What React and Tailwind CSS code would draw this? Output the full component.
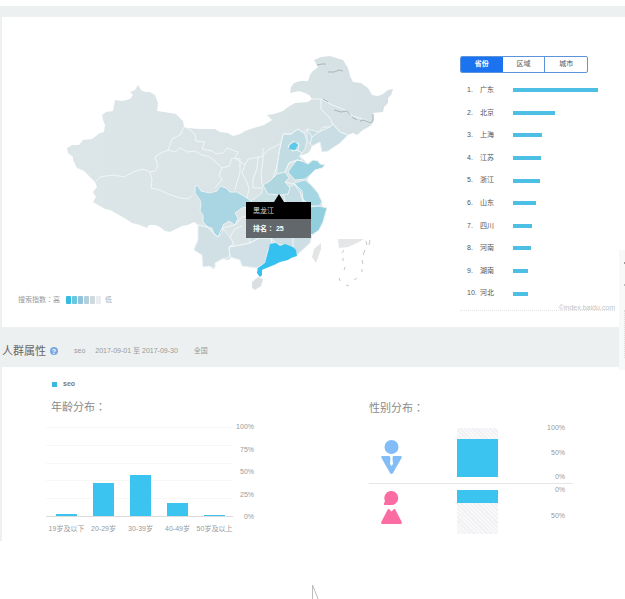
import React from "react";

const PROVINCES = [
  ["广东", 85],
  ["北京", 42],
  ["上海", 29],
  ["江苏", 28],
  ["浙江", 27],
  ["山东", 23],
  ["四川", 19],
  ["河南", 18],
  ["湖南", 15],
  ["河北", 15],
];

const AGES = [
  ["19岁及以下", 2],
  ["20-29岁", 33],
  ["30-39岁", 41],
  ["40-49岁", 13],
  ["50岁及以上", 1],
];

const SCALE = ["bg-[#35bce3]", "bg-[#66c8e2]", "bg-[#8fc4dc]", "bg-[#b3cfdc]", "bg-[#cfd9de]", "bg-[#e9edef]"];

const LAND =
  "M138 85L141 90 145 92 150 92 155 95 158 103 157 111 164 112 170 113 176 114 180 118 183 121 184 127 187 128 200 129 215 129 220 132 228 133 233 136 240 134 245 131 257 127 264 125 272 120 267 115 274 114 283 111 288 107 295 103 308 102 312 99 309 95 305 93 299 91 290 93 291 87 294 83 300 81 308 81 310 75 312 72 318 67 314 60 321 57 330 56 336 58 343 60 348 68 350 76 353 82 361 83 368 88 372 95 378 96 383 94 388 90 393 89 391 95 388 98 388 103 384 107 383 112 373 113 374 119 372 125 363 130 357 135 353 133 348 135 340 143 335 146 328 151 322 152 323 145 320 142 316 143 312 146 310 151 308 153 300 156 304 160 308 164 313 160 318 161 320 164 325 165 322 168 315 170 310 175 307 180 311 185 315 189 318 193 319 198 322 202 322 206 327 208 325 215 323 222 319 230 312 235 310 243 303 249 297 255 291 258 280 261 274 263 264 267 262 270 262 275 260 277 257 273 257 268 250 267 242 266 240 260 233 257 228 260 222 259 215 263 215 268 213 269 209 266 203 267 202 261 202 255 194 250 195 246 198 240 198 225 194 222 188 225 182 226 176 229 170 232 165 231 160 227 155 225 149 225 147 228 140 225 132 223 126 219 119 215 110 210 105 209 98 205 93 202 96 197 93 192 97 187 95 182 90 177 84 171 77 168 73 160 73 157 68 153 67 148 72 145 79 145 83 140 92 139 100 133 104 132 105 125 103 120 102 115 106 112 113 111 114 105 115 100 122 101 130 99 133 95 130 92 135 90Z";

const BORDERS = [
  "M184 127L180 135 172 139 168 150 161 153 155 157 158 166 155 171 150 172 143 169 133 172 124 177 114 175 106 176 100 177 96 181",
  "M150 172L152 180 151 188 160 190 168 194 180 198 188 199 193 195",
  "M168 150L175 152 180 148 188 152 195 151 202 155 210 157 218 164 222 168 219 175 222 180 218 184 215 188",
  "M187 128L195 134 196 141 205 142 202 149 212 151 216 154 223 153 227 148 238 152 235 158 245 165",
  "M222 168L229 166 232 158 240 159 240 173 237 182 235 190",
  "M245 165L248 159 254 158 263 156 268 150 276 146 281 143",
  "M245 165L242 173 247 182 249 189 247 198",
  "M258 157L257 169 253 179 253 188 262 188",
  "M281 143L279 153 277 166 273 178",
  "M263 148L263 160 261 174 262 185",
  "M281 143L283 134 291 134 298 129 304 133 307 129 312 137 310 144",
  "M288 146L293 141 299 144 298 150 292 151Z",
  "M297 150L302 153 299 157M285 172L289 163 297 160 302 161",
  "M312 137L319 132 323 127 330 127 333 124 329 117 321 109 321 99",
  "M333 124L340 132 348 135",
  "M312 99L321 99 332 105 343 109 353 116 366 120 372 125",
  "M198 225L207 227 218 237 222 228 235 225 242 217 247 216",
  "M230 257L229 247 234 244 230 237 235 229 242 226",
  "M229 247L241 245 250 243 259 238 271 238 272 243",
  "M271 238L276 223 273 208 261 205 247 205",
  "M285 182L294 184 300 192 303 201 297 207 286 206 280 195",
  "M297 207L300 214 294 224 293 239 293 247",
  "M310 207L303 216 302 228 306 231 312 235",
];

function ChinaMap() {
  return (
    <svg className="block w-full" viewBox="60 50 340 243" role="img" aria-label="中国">
      <defs>
        <linearGradient id="land" x1="0" x2="1" y1="0" y2="0">
          <stop offset="0" stopColor="#dce6e9" />
          <stop offset="0.5" stopColor="#dae4e7" />
          <stop offset="1" stopColor="#d4e0e3" />
        </linearGradient>
      </defs>
      <path d={LAND} fill="url(#land)" />
      <g stroke="#eaf2f4" strokeWidth="1" strokeLinejoin="round">
        <path fill="#c2dce4" d="M281 143L283 134 291 134 298 129 304 133 307 140 305 149 300 156 302 161 297 160 289 163 285 172 277 174 277 166 279 153Z" />
        <path fill="#c8dde4" d="M307 129L319 132 330 127 333 124 340 132 348 135 340 143 328 151 322 152 320 142 312 146 307 140Z" />
        <path fill="#c8dfe4" d="M263 185L262 193 256 198 248 202 255 208 270 209 285 215 300 214 303 201 290 188Z" />
        <path fill="#c4dde4" d="M294 184L300 182 305 190 303 201 297 207 286 206 283 192Z" />
        <path fill="#cddfe5" d="M248 216L250 243 259 238 271 238 277 244 293 247 297 255 310 243 312 235 302 214Z" />
        <path fill="#d0e0e6" d="M229 247L241 245 250 243 259 238 271 238 272 243 268 250 265 263 257 268 242 266 240 260 230 257Z" />
        <path fill="#d1e0e4" d="M198 225L207 227 218 237 222 228 230 237 234 244 229 247 230 257 222 259 215 263 215 268 209 266 203 267 202 255 194 250 198 240Z" />
        <path fill="#a9d6e2" d="M195 186L198 186 201 191 210 193 217 191 220 186 226 188 230 192 237 192 247 198 252 202 248 207 242 208 235 213 238 218 235 225 229 221 223 225 222 233 218 237 214 234 212 228 208 227 203 222 203 215 200 211 201 204 200 200 195 193Z" />
        <path fill="#b0d7e0" d="M263 185L270 181 273 178 277 174 285 172 289 178 285 182 290 188 288 194 280 195 268 194Z" />
        <path fill="#99d3e1" d="M288 172L292 166 297 160 302 161 308 164 313 160 318 161 320 164 325 165 322 168 315 170 310 175 305 179 295 180Z" />
        <path fill="#a5d6e3" d="M294 183L305 180 311 185 318 193 322 202 319 206 310 206 303 199 302 191Z" />
        <path fill="#91cede" d="M310 207L319 206 327 208 325 215 323 222 319 230 312 235 303 226 303 216Z" />
        <path fill="#35c1ef" stroke="none" d="M270 244L276 243 280 246 285 244 293 247 296 250 297 256 291 258 288 260 280 262 274 265 264 269 262 270 262 275 260 277 257 273 258 268 265 263 268 252Z" />
      </g>
      <g fill="none" stroke="#f0f6f7" strokeWidth="1" strokeLinejoin="round">
        {BORDERS.map((d) => (
          <path key={d} d={d} />
        ))}
      </g>
      <path d="M290 145L295 142 298 145 295 150 289 149Z" fill="#5cc8ea" />
      <g fill="none" stroke="#aab5b9" strokeWidth="1">
        <path d="M317 65l5-1 4 0M328 72l6 0 5-2 4 1" />
        <path d="M323 99l5 3M334 110l7 2 6-1 3 4M352 117l5 3M360 121l4-1 6 3 3-2 0-7" />
      </g>
      <path d="M252 282L258 277 263 279 261 286 255 290 252 288Z" fill="#dcdfe1" />
      <path d="M321 243L321 249 316 263 312 257 314 249Z" fill="#e2e4e6" />
      <path d="M338 239L364 239 357 243 348 247 339 248Z" fill="#e4e6e8" />
      <g fill="none" stroke="#c3c8cb" strokeWidth="1">
        <path d="M366 241l1 4M370 240l-1 5M365 250l-2 5M362 260l1 4M362 269l0 3M357 278l-3 2M349 286l-3-1M340 281l-1-3M344 270l1-3M343 261l0-3M342 253l2-3" />
      </g>
    </svg>
  );
}

function Colon() {
  return <span className="font-['Noto_Sans_CJK_TC',sans-serif]">：</span>;
}

function MapCard() {
  return (
    <section className="flex bg-white pb-4">
      <div className="min-w-0 flex-1 pt-[33px]">
        <div className="relative ml-[58px] w-[340px]">
          <ChinaMap />
          <div role="tooltip" className="absolute left-[186px] top-[152px] w-[65px] text-white">
            <svg className="absolute -top-2 left-7 h-2 w-2.5" viewBox="0 0 10 8" aria-hidden="true">
              <path d="M5 0L10 8H0Z" fill="#000" />
            </svg>
            <div className="bg-black pl-[7px] text-[7px] leading-[17px] text-[#d8d8d8]">黑龙江</div>
            <div className="bg-[#62676b] pl-[7px] text-[7px] font-bold leading-[19px]">排名<Colon /> 25</div>
          </div>
        </div>
        <div className="flex items-center pl-4 text-[7px] leading-3 text-[#999]">
          <span>搜索指数<Colon />高</span>
          <span className="ml-1.5 flex gap-px">
            {SCALE.map((c) => (
              <i key={c} className={"h-2 w-[5px] rounded-[1px] " + c} />
            ))}
          </span>
          <span className="ml-1 text-[#aaa]">低</span>
        </div>
      </div>
      <div className="w-[165px] shrink-0 pt-[39px]">
        <div className="mb-1.5 flex h-[17px] w-32 overflow-hidden rounded-[2px] border border-[#5b94d8] text-[7px] text-[#555]">
          <button className="flex-1 bg-[#1c73f0] font-bold text-white">省份</button>
          <button className="flex-1 border-r border-[#5b94d8]">区域</button>
          <button className="flex-1">城市</button>
        </div>
        <ol className="grid h-[226px] grid-rows-10 text-[7px] text-[#555]">
          {PROVINCES.map(([name, w], i) => (
            <li key={name} className="flex items-center pl-[7px]">
              <span className="w-[13px]">{i + 1}.</span>
              <span className="w-[33px]">{name}</span>
              <i className="h-1 bg-[#4dbfe5]" style={{ width: w }} />
            </li>
          ))}
        </ol>
        <p className="mr-2.5 h-1.5 border-b border-dotted border-[#e2e2e2] text-right text-[7px] leading-[5px] text-[#c4c4c4]">©index.baidu.com</p>
      </div>
    </section>
  );
}

function AgeChart() {
  return (
    <div className="min-w-0 flex-1 pt-[11px]">
      <div className="flex items-center gap-1.5 pl-[50px] text-[7px] font-bold leading-3 text-[#777]">
        <i className="h-[5px] w-[5px] bg-[#3bb8e0]" />
        seo
      </div>
      <h3 className="mt-2 pl-[49px] text-[11px] leading-4 text-[#8a8a8a]">年龄分布<Colon /></h3>
      <div className="ml-11 mt-1.5 flex">
        <div className="w-[187px]">
          <div className="mt-1.5 grid h-[90px] grid-rows-5 border-b border-[#dcdcdc] *:col-start-1 *:border-t *:border-[#f7f7f7]">
            <i className="row-start-1" />
            <i className="row-start-2" />
            <i className="row-start-3" />
            <i className="row-start-4" />
            <i className="row-start-5" />
            <div className="row-span-full row-start-1 flex items-end border-none pl-0.5">
              {AGES.map(([label, h]) => (
                <span key={label} className="flex w-[37px] justify-center">
                  <i className="w-[21px] bg-[#3cc4f1]" style={{ height: h }} />
                </span>
              ))}
            </div>
          </div>
          <div className="mt-1.5 flex pl-0.5 text-[7px] leading-3 text-[#999]">
            {AGES.map(([label]) => (
              <span key={label} className="flex w-[37px] justify-center whitespace-nowrap">{label}</span>
            ))}
          </div>
        </div>
        <div className="flex h-[102px] w-[21px] flex-col justify-between text-right text-[7px] leading-3 text-[#999]">
          <span>100%</span>
          <span>75%</span>
          <span>50%</span>
          <span>25%</span>
          <span>0%</span>
        </div>
      </div>
    </div>
  );
}

function GenderChart() {
  const hatch = "bg-[repeating-linear-gradient(45deg,#f0f0f2_0px,#f0f0f2_1px,#f8f8fa_1px,#f8f8fa_3px)]";
  return (
    <div className="w-64 shrink-0 pt-8">
      <h3 className="text-[11px] leading-4 text-[#8a8a8a]">性别分布<Colon /></h3>
      <div className="mt-1.5 flex h-[62px] w-[204px] border-b border-[#e6e6e6]">
        <svg className="ml-3 mt-[18px] h-[35px] w-[21px]" viewBox="0 0 21 35" aria-label="男">
          <circle cx="10.5" cy="7" r="7" fill="#83bdf8" />
          <path d="M1.5 16H19.500Q21.500 16 20.500 18L12 33Q10.500 35 9 33L0.500 18Q-0.500 16 1.500 16Z" fill="#83bdf8" />
          <path d="M8.500 16H12L11.500 18 12 24 10.500 26 9 24 9.500 18Z" fill="#fff" />
        </svg>
        <div className={"ml-[55px] mt-1.5 flex h-[49px] w-[41px] items-end " + hatch}>
          <i className="h-[38px] w-full bg-[#3cc4f1]" />
        </div>
        <div className="flex flex-1 flex-col justify-between pr-2 text-right text-[7px] leading-3 text-[#999]">
          <span>100%</span>
          <span>50%</span>
          <span>0%</span>
        </div>
      </div>
      <div className="flex w-[204px]">
        <svg className="ml-3 mt-[7px] h-[33px] w-[21px]" viewBox="0 0 21 33" aria-label="女">
          <path d="M10.500 0A7 7 0 1 1 10 14H4Q2.500 14 3 12.500L4 10A7 7 0 0 1 10.500 0Z" fill="#fb6ca2" />
          <path d="M7 18H8L10.500 20.500 13 18H14L20.500 30.500Q21.500 33 19.500 33H1.500Q-0.500 33 0.500 30.500Z" fill="#fb6ca2" />
          <path d="M6.500 15.500L10.500 19 14.500 15.500" fill="none" stroke="#fff" />
        </svg>
        <div className={"ml-[55px] mt-1.5 h-11 w-[41px] " + hatch}>
          <i className="block h-[13px] w-full bg-[#3cc4f1]" />
        </div>
        <div className="flex h-[38px] flex-1 flex-col justify-between pr-2 text-right text-[7px] leading-3 text-[#999]">
          <span>0%</span>
          <span>50%</span>
        </div>
      </div>
    </div>
  );
}

export default function App() {
  return (
    <main className="bg-white pt-1.5 font-['Liberation_Sans','Noto_Sans_CJK_SC',sans-serif]">
      <div className="relative bg-[#edf0f0] pl-0.5 pt-[11px]">
        <MapCard />
        <header className="flex h-10 items-center pt-2 text-[7px] text-[#999]">
          <h2 className="text-[11px] text-[#666]">人群属性</h2>
          <button aria-label="帮助" className="ml-1 flex h-2 w-2 items-center justify-center rounded-full bg-[#79a8e2] text-[7px] font-bold leading-none text-white">?</button>
          <span className="ml-4">seo</span>
          <span className="ml-2.5">2017-09-01 至 2017-09-30</span>
          <span className="ml-4">全国</span>
        </header>
        <section className="flex bg-white pb-1.5">
          <AgeChart />
          <GenderChart />
        </section>
        <aside className="absolute right-0 top-[244px] flex h-[120px] w-1.5 flex-col items-end justify-start bg-[#f7f8f8] pt-3">
          <i className="h-0.5 w-px bg-[#999]" />
          <i className="mt-5 h-0.5 w-px bg-[#bbb]" />
          <i className="mt-6 h-12 border-r border-dotted border-[#ddd]" />
        </aside>
      </div>
      <footer className="flex justify-center pl-1.5 pt-11">
        <svg className="h-[15px] w-2" viewBox="0 0 8 15" aria-hidden="true">
          <path d="M0.500 15V0L6.500 15" fill="none" stroke="#b5b5b5" strokeWidth="0.900" />
        </svg>
      </footer>
    </main>
  );
}
